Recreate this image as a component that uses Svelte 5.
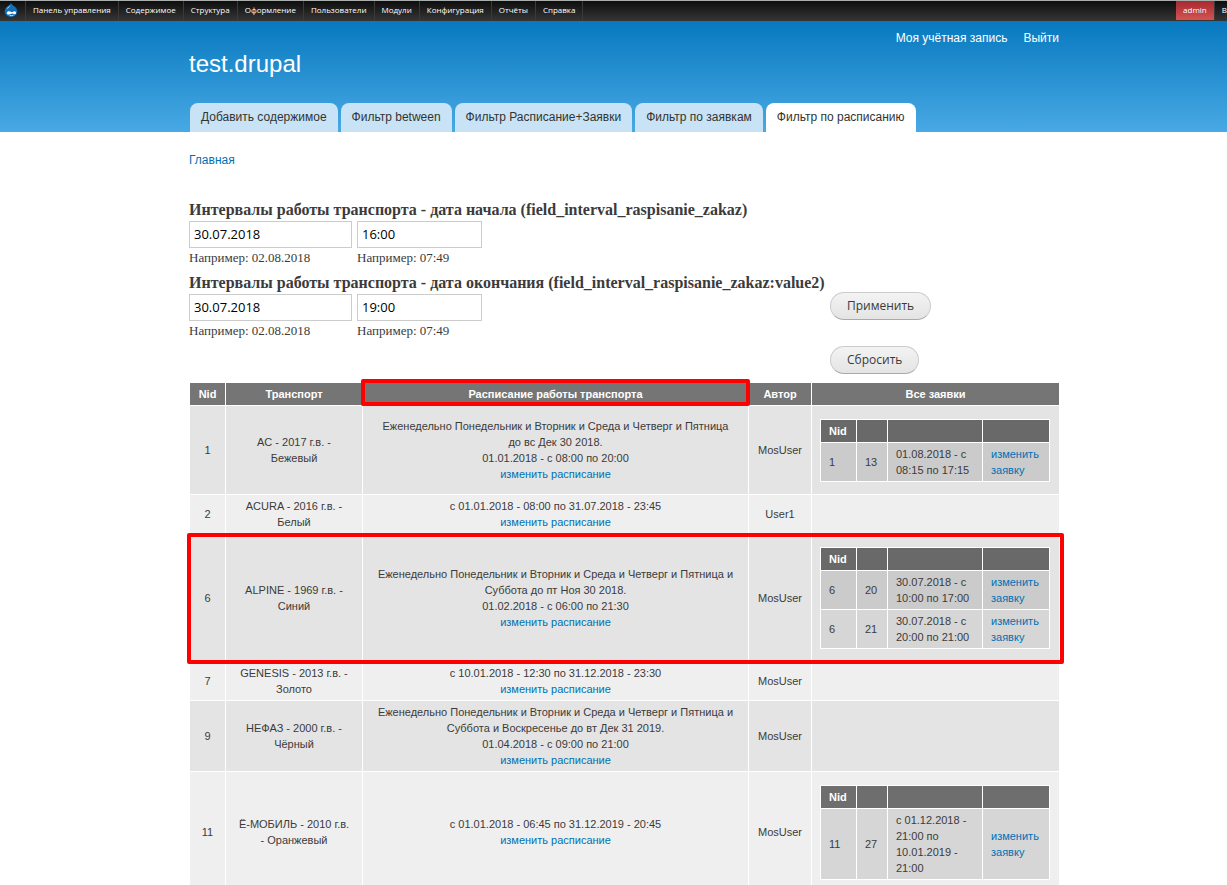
<script>
  const menu = ['Панель управления', 'Содержимое', 'Структура', 'Оформление', 'Пользователи', 'Модули', 'Конфигурация', 'Отчёты', 'Справка'];
  const tabs = ['Добавить содержимое', 'Фильтр between', 'Фильтр Расписание+Заявки', 'Фильтр по заявкам', 'Фильтр по расписанию'];
  const filters = [
    { id: 'start', label: 'Интервалы работы транспорта - дата начала (field_interval_raspisanie_zakaz)', date: '30.07.2018', time: '16:00' },
    { id: 'end', label: 'Интервалы работы транспорта - дата окончания (field_interval_raspisanie_zakaz:value2)', date: '30.07.2018', time: '19:00' },
  ];
  const rows = [
    { nid: 1, car: 'AC - 2017 г.в. - Бежевый', lines: ['Еженедельно Понедельник и Вторник и Среда и Четверг и Пятница до вс Дек 30 2018.', '01.01.2018 - с 08:00 по 20:00'], author: 'MosUser', orders: [[1, 13, '01.08.2018 - с 08:15 по 17:15']] },
    { nid: 2, car: 'ACURA - 2016 г.в. - Белый', lines: ['с 01.01.2018 - 08:00 по 31.07.2018 - 23:45'], author: 'User1', orders: [] },
    { nid: 6, car: 'ALPINE - 1969 г.в. - Синий', lines: ['Еженедельно Понедельник и Вторник и Среда и Четверг и Пятница и Суббота до пт Ноя 30 2018.', '01.02.2018 - с 06:00 по 21:30'], author: 'MosUser', marked: true, orders: [[6, 20, '30.07.2018 - с 10:00 по 17:00'], [6, 21, '30.07.2018 - с 20:00 по 21:00']] },
    { nid: 7, car: 'GENESIS - 2013 г.в. - Золото', lines: ['с 10.01.2018 - 12:30 по 31.12.2018 - 23:30'], author: 'MosUser', orders: [] },
    { nid: 9, car: 'НЕФАЗ - 2000 г.в. - Чёрный', lines: ['Еженедельно Понедельник и Вторник и Среда и Четверг и Пятница и Суббота и Воскресенье до вт Дек 31 2019.', '01.04.2018 - с 09:00 по 21:00'], author: 'MosUser', orders: [] },
    { nid: 11, car: 'Ё-МОБИЛЬ - 2010 г.в. - Оранжевый', lines: ['с 01.01.2018 - 06:45 по 31.12.2019 - 20:45'], author: 'MosUser', orders: [[11, 27, 'с 01.12.2018 - 21:00 по 10.01.2019 - 21:00']] },
  ];
</script>

<div class="page">
  <nav class="toolbar" aria-label="Администрирование">
    <a class="home" href="#home" aria-label="Главная">
      <svg viewBox="0 0 14 14" width="14" height="14">
        <path d="M7 0C7.600 1.700 9.300 2.400 10.600 3.500C12.300 4.900 13.300 6.400 13.300 8.300C13.300 11.600 10.500 14 7 14S.7 11.600 .7 8.300C.7 6.300 1.700 4.800 3.400 3.500C4.700 2.400 6.400 1.700 7 0Z" fill="#1470b4" />
        <path d="M6.300 2C5.700 2.900 4.700 3.500 3.900 4.200C3.200 4.800 2.700 5.400 2.400 6.100C4 5.500 5.700 4 6.300 2Z" fill="#b5dcf4" />
        <path d="M2.800 9.900C2.800 8.700 3.900 8.200 5.100 8.200C6.500 8.200 7.200 9.200 8 9.200C8.800 9.200 9.300 8.200 10.400 8.200C11.400 8.200 12 8.800 12 9.700C12 10.700 11.500 11.200 10.700 11.200C9.600 11.200 8.900 10.500 8 10.500S6.500 11.500 4.900 11.500C3.600 11.500 2.800 10.900 2.800 9.900Z" fill="#fff" />
        <path d="M5.500 12.300Q7.800 13.200 9.600 12.100" fill="none" stroke="#e3f1fa" stroke-width=".8" />
      </svg>
    </a>
    {#each menu as item}<a href="#menu">{item}</a>{/each}
    <span class="user"><a class="admin" href="#user">admin</a><a class="logout" href="#logout">Выйти</a></span>
  </nav>

  <header>
    <div class="inner">
      <div class="account"><a href="#account">Моя учётная запись</a><a href="#logout">Выйти</a></div>
      <a class="site" href="#site">test.drupal</a>
      <nav class="tabs">
        {#each tabs as tab, i}<a href="#tab" class:active={i === 4}>{tab}</a>{/each}
      </nav>
    </div>
  </header>

  <main class="inner">
    <a class="crumb" href="#front">Главная</a>
    <form onsubmit={(e) => e.preventDefault()}>
      <div class="filters">
        {#each filters as f}
          <fieldset>
            <legend>{f.label}</legend>
            <div class="pair">
              <div>
                <input class="date" id="{f.id}-date" aria-label="Дата" aria-describedby="{f.id}-date-hint" value={f.date} />
                <small id="{f.id}-date-hint">Например: 02.08.2018</small>
              </div>
              <div>
                <input class="time" id="{f.id}-time" aria-label="Время" aria-describedby="{f.id}-time-hint" value={f.time} />
                <small id="{f.id}-time-hint">Например: 07:49</small>
              </div>
            </div>
          </fieldset>
        {/each}
      </div>
      <div class="actions">
        <button type="submit">Применить</button>
        <button type="reset">Сбросить</button>
      </div>
    </form>

    <table class="schedule">
      <colgroup><col class="c1" /><col class="c2" /><col class="c3" /><col class="c4" /><col /></colgroup>
      <thead>
        <tr>
          <th>Nid</th>
          <th>Транспорт</th>
          <th class="marked">Расписание работы транспорта<span class="mark"></span></th>
          <th>Автор</th>
          <th>Все заявки</th>
        </tr>
      </thead>
      <tbody>
        {#each rows as row}
          <tr class:marked={row.marked}>
            <td>{row.nid}{#if row.marked}<span class="mark"></span>{/if}</td>
            <td class="car">{row.car}</td>
            <td class="plan">
              {#each row.lines as line}<div>{line}</div>{/each}
              <a href="#edit">изменить расписание</a>
            </td>
            <td>{row.author}</td>
            <td class="nest">
              {#if row.orders.length}
                <table class="orders">
                  <colgroup><col class="o1" /><col class="o2" /><col class="o3" /><col /></colgroup>
                  <thead><tr><th>Nid</th><th></th><th></th><th></th></tr></thead>
                  <tbody>
                    {#each row.orders as [nid, num, when]}
                      <tr><td>{nid}</td><td>{num}</td><td>{when}</td><td><a href="#order">изменить заявку</a></td></tr>
                    {/each}
                  </tbody>
                </table>
              {/if}
            </td>
          </tr>
        {/each}
      </tbody>
    </table>
  </main>
</div>

<style>
  :global(body) {
    margin: 0;
    overflow-x: hidden;
    background: #fff;
    color: #3b3b3b;
  }
  a {
    color: #0071b3;
    text-decoration: none;
  }
  .page {
    width: calc(100% + 22px);
    font-family: "Liberation Sans", Arial, sans-serif;
  }
  .inner {
    max-width: 871px;
    margin: 0 auto;
  }

  .toolbar {
    display: flex;
    height: 20px;
    border-top: 1px solid #a9adab;
    background: linear-gradient(#0e0e0e, #363636);
    font: 500 8px/18px "Open Sans", sans-serif;
    white-space: nowrap;
  }
  .toolbar a {
    padding: 0 7px;
    border-right: 1px solid #3a3a3a;
    color: #fff;
  }
  .toolbar .home {
    padding: 2px 7px 0 4px;
    line-height: 0;
  }
  .user {
    display: flex;
    margin-left: auto;
  }
  .toolbar .admin {
    height: 19px;
    background: linear-gradient(#a8292f, #d25452);
  }
  .toolbar .logout {
    padding-right: 2px;
    border-right: 0;
  }

  header {
    background: linear-gradient(#0779bf, #48a9e4);
  }
  header .inner {
    display: flex;
    flex-direction: column;
  }
  .account {
    display: flex;
    justify-content: flex-end;
    gap: 16px;
    padding: 8px 1px 0 0;
    font-size: 12px;
    line-height: 18px;
  }
  .account a,
  .site {
    color: #fff;
  }
  .site {
    align-self: flex-start;
    font-size: 24px;
    line-height: 34px;
  }
  .tabs {
    display: flex;
    gap: 3px;
    padding: 22px 0 0 1px;
  }
  .tabs a {
    padding: 0 11px;
    border-radius: 8px 8px 0 0;
    background: #c7e3f5;
    color: #333;
    font-size: 12px;
    line-height: 29px;
    white-space: nowrap;
  }
  .tabs .active {
    background: #fff;
  }

  .crumb {
    display: block;
    padding: 18px 0 30px;
    font-size: 12px;
    line-height: 20px;
  }
  form {
    display: grid;
    grid-template-columns: minmax(0, 641px) auto;
    padding-bottom: 8px;
    font-family: Georgia, "Liberation Serif", serif;
  }
  fieldset {
    min-width: 0;
    height: 73px;
    margin: 0;
    padding: 0;
    border: 0;
  }
  legend {
    padding: 0 0 2px;
    font-size: 16px;
    font-weight: bold;
    line-height: 19px;
    white-space: nowrap;
  }
  .pair {
    display: flex;
    gap: 5px;
  }
  input {
    display: block;
    box-sizing: border-box;
    width: 163px;
    height: 27px;
    padding: 0 4px 2px;
    border: 1px solid #ccc;
    color: #000;
    font: 13px "Open Sans", sans-serif;
  }
  .time {
    width: 125px;
  }
  small {
    display: block;
    font-size: 13px;
    line-height: 20px;
  }
  .actions {
    display: flex;
    flex-direction: column;
    align-items: flex-start;
    gap: 26px;
    padding-top: 92px;
  }
  button {
    height: 28px;
    padding: 0 16px 2px;
    border: 1px solid #ccc;
    border-bottom-color: #aaa;
    border-radius: 14px;
    background: linear-gradient(#f3f3f3, #e4e4e4);
    color: #3a3a3a;
    font: 12px "Open Sans", sans-serif;
  }

  table {
    width: 100%;
    border-collapse: collapse;
    table-layout: fixed;
    font-size: 11px;
    line-height: 16px;
  }
  th,
  td {
    padding: 3px 8px;
    border: 1px solid #fff;
  }
  th {
    background: #757575;
    color: #fff;
  }
  .schedule td {
    text-align: center;
  }
  .schedule .car {
    padding: 3px 12px;
  }
  .schedule .plan {
    padding: 3px 13px;
  }
  .schedule .nest {
    padding-right: 9px;
  }
  .schedule > tbody > tr:nth-child(odd) {
    background: #e4e4e4;
  }
  .schedule > tbody > tr:nth-child(even) {
    background: #efefef;
  }
  .c1 { width: 36px; }
  .c2 { width: 137px; }
  .c3 { width: 386px; }
  .c4 { width: 63px; }
  .orders {
    margin: 10px 0 9px;
  }
  .orders th {
    height: 16px;
    background: #696969;
    text-align: left;
  }
  .schedule .orders td {
    text-align: left;
  }
  .orders tbody tr:nth-child(odd) {
    background: #cbcbcb;
  }
  .orders tbody tr:nth-child(even) {
    background: #d6d6d6;
  }
  .schedule > tbody > tr:nth-child(even) .orders tbody tr {
    background: #d6d6d6;
  }
  .schedule > tbody > tr:nth-child(even) .orders th {
    background: #6e6e6e;
  }
  .o1 { width: 36px; }
  .o2 { width: 31px; }
  .o3 { width: 95px; }

  .marked {
    position: relative;
  }
  .mark {
    position: absolute;
    z-index: 1;
    inset: -4px -2px -1px;
    border: 4px solid #f00;
    border-radius: 2px;
    pointer-events: none;
  }
  tr.marked .mark {
    inset: -1px -4px -2px -3px;
  }
</style>
